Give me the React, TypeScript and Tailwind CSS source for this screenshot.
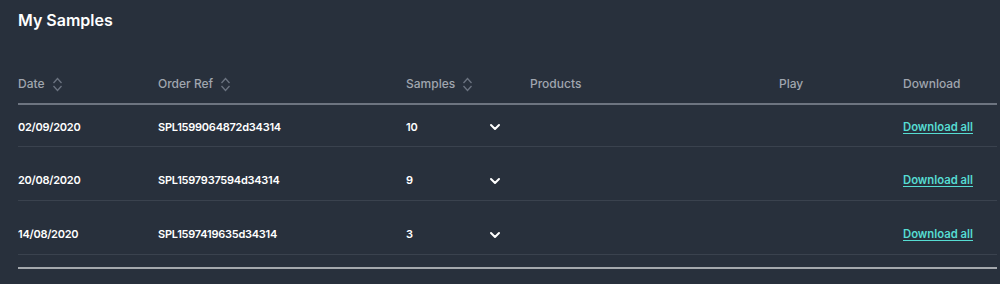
import { ChevronDown } from "lucide-react";

const rows = [
  { date: "02/09/2020", ref: "SPL1599064872d34314", samples: 10 },
  { date: "20/08/2020", ref: "SPL1597937594d34314", samples: 9 },
  { date: "14/08/2020", ref: "SPL1597419635d34314", samples: 3 },
];

const SortIcon = () => (
  <svg width="11" height="15" viewBox="0 0 11 15" fill="none" className="ml-[7px] text-[#6b7380]">
    <path d="M1.5 6 L5.5 1.5 L9.5 6" stroke="currentColor" strokeWidth="1.3" />
    <path d="M1.5 9 L5.5 13.5 L9.5 9" stroke="currentColor" strokeWidth="1.3" />
  </svg>
);

const cols = "grid grid-cols-[140px_248px_124px_249px_124px_1fr]";

export default function App() {
  return (
    <div
      className="h-[284px] w-[1000px] bg-[#28303c] pl-[18px] pr-[3px] text-white"
      style={{ fontFamily: "Inter, 'Noto Sans', sans-serif" }}
    >
      <h1 className="pt-[9px] text-[16px] font-semibold leading-[22px]">
        My Samples
      </h1>

      <div className={`${cols} mt-[42px] h-[32px] items-center border-b-2 border-[#6d7480] pb-[8px] text-[12px] font-medium text-[#a0a6af]`}>
        <div className="flex items-center">Date<SortIcon /></div>
        <div className="flex items-center">Order Ref<SortIcon /></div>
        <div className="flex items-center">Samples<SortIcon /></div>
        <div>Products</div>
        <div>Play</div>
        <div>Download</div>
      </div>

      {rows.map((r, i) => (
        <div
          key={r.ref}
          className={`${cols} ${i === 0 ? "h-[42px] pt-[3px]" : "h-[54px] pt-[14px]"} items-center border-b border-[#3a424e] text-[11px] font-semibold tracking-[-0.25px]`}
        >
          <div>{r.date}</div>
          <div>{r.ref}</div>
          <div className="flex items-center">
            <span className="w-[81px]">{r.samples}</span>
            <ChevronDown size={16} strokeWidth={3} />
          </div>
          <div />
          <div />
          <div>
            <a href="#" className="text-[11.3px] tracking-normal text-[#56dcd2] underline underline-offset-2">
              Download all
            </a>
          </div>
        </div>
      ))}

      <div className="mt-[12px] h-[2px] bg-[#a4a8ad]" />
    </div>
  );
}
